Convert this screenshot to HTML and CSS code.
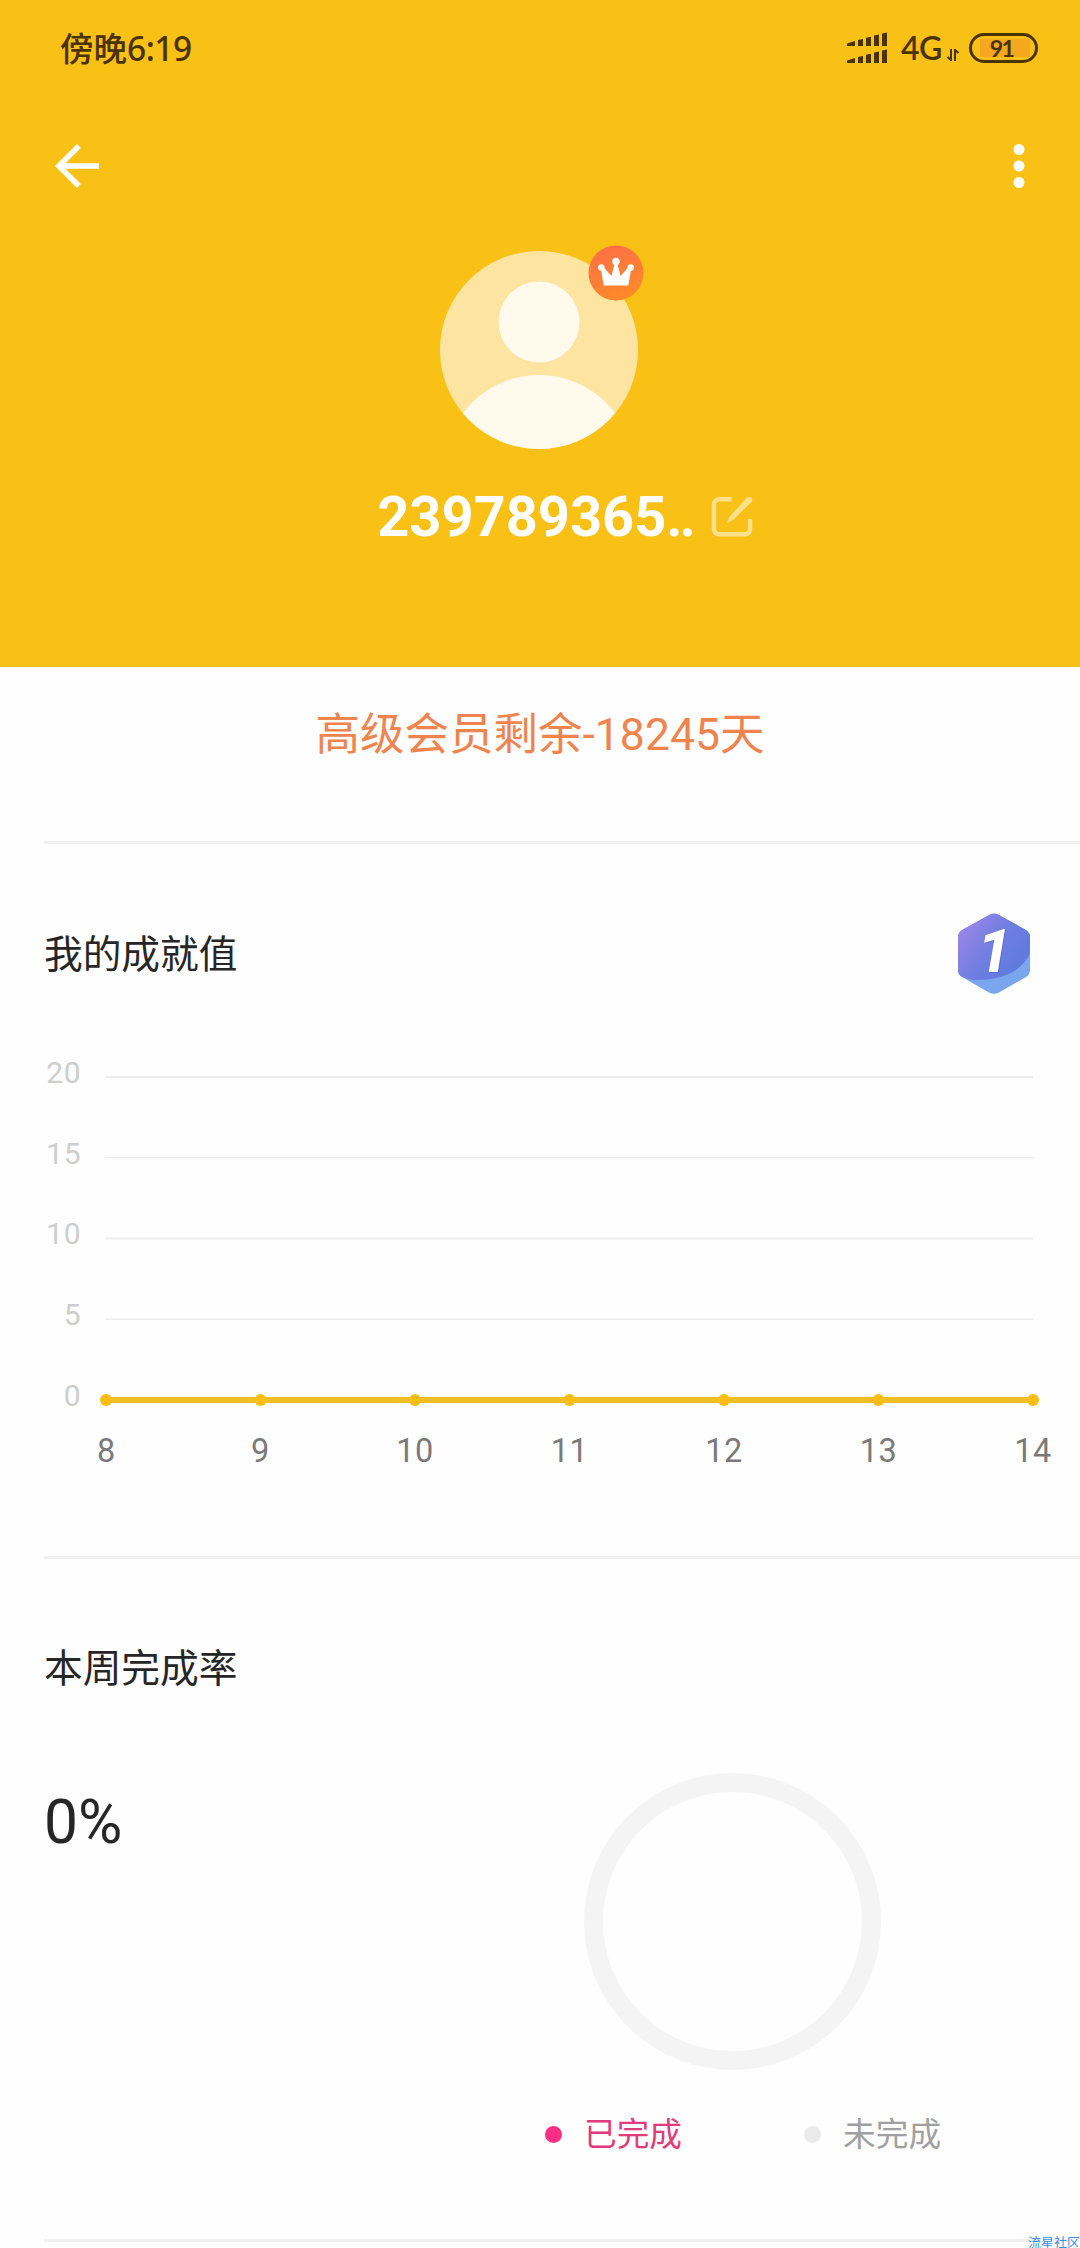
FILE: index.html
```html
<!DOCTYPE html>
<html lang="zh-CN">
<head>
<meta charset="utf-8">
<title>个人资料</title>
<link rel="stylesheet" href="styles.css">
</head>
<body>
<main class="screen">
  <header class="hero">
    <div class="status-bar">
      <div class="clock">傍晚<span class="clock-time">6:19</span></div>
      <div class="status-icons">
        <svg class="signal" width="42" height="32" viewBox="0 0 42 32" fill="#4a3300">
          <path d="M1 11.500l8-2.500v5h-8zM12 8l5-1v7h-5zM20 5.800l5-1v9.200h-5zM28 3.500l5-1v11.500h-5zM36 1.500l5-1v13.500h-5z"/>
          <path d="M1 28.500l8-2.500v5h-8zM12 25l5-1v7h-5zM20 22.800l5-1v9.200h-5zM28 20.500l5-1v11.500h-5zM36 18.500l5-1v13.500h-5z"/>
        </svg>
        <span class="network">4G</span>
        <svg class="transfer" width="12" height="14" viewBox="0 0 12 14" fill="none" stroke="#4a3300" stroke-width="2">
          <path d="M4 1v12M4 12L0.500 9M8 13V1M8 2l3.500 3"/>
        </svg>
        <div class="battery"><span class="battery-level">91</span></div>
      </div>
    </div>
    <nav class="toolbar">
      <svg width="66" height="66" viewBox="0 0 24 24" fill="#fff"><path d="M20 11H7.830l5.590-5.590L12 4l-8 8 8 8 1.410-1.410L7.830 13H20v-2z"/></svg>
      <svg width="66" height="66" viewBox="0 0 24 24" fill="#fff"><circle cx="12" cy="6" r="2"/><circle cx="12" cy="12" r="2"/><circle cx="12" cy="18" r="2"/></svg>
    </nav>
    <div class="avatar">
      <svg width="198" height="198" viewBox="0 0 198 198">
        <defs><clipPath id="face"><circle cx="99" cy="99" r="99"/></clipPath></defs>
        <circle cx="99" cy="99" r="99" fill="#fde4a1"/>
        <g clip-path="url(#face)" fill="#fffaec"><circle cx="99" cy="71" r="40.500"/><circle cx="99" cy="219" r="95"/></g>
      </svg>
      <svg class="crown" width="56" height="56" viewBox="0 0 56 56">
        <defs><linearGradient id="ember" x1="0.300" y1="0" x2="0.700" y2="1"><stop offset="0" stop-color="#ff7047"/><stop offset="1" stop-color="#fe8b27"/></linearGradient></defs>
        <circle cx="28" cy="28" r="27.500" fill="url(#ember)"/>
        <g fill="#fff"><path d="M15.800 40.500L12.500 22.500l2.500-1 8.500 9.500 3.500-14h2l3.500 14 8.500-9.500 2.500 1-3.300 18z"/><circle cx="28" cy="16.500" r="3.700"/><circle cx="13.300" cy="22.500" r="3.200"/><circle cx="42.700" cy="22.500" r="3.200"/></g>
      </svg>
    </div>
    <div class="name-row">
      <h1 class="name">239789365<span class="name-dots">..</span></h1>
      <svg width="42" height="42" viewBox="0 0 42 42" fill="none" stroke="#fde18a" stroke-width="4.500">
        <path d="M20.500 3.300H8a5 5 0 0 0-5 5v25a5 5 0 0 0 5 5h26a5 5 0 0 0 5-5V23"/>
        <path d="M36 1.500a3.200 3.200 0 0 1 4.500 4.500L22.500 23.500l-7 4 3.500-7.500z" fill="#fde18a" stroke="none"/>
      </svg>
    </div>
  </header>

  <section class="membership">高级会员剩余-18245天</section>

  <section class="panel achievement">
    <div class="panel-head">
      <h2 class="panel-title">我的成就值</h2>
      <svg width="72" height="82" viewBox="0 0 72 82">
        <defs>
          <linearGradient id="violet" x1="0" y1="0.200" x2="0.900" y2="0.800"><stop offset="0" stop-color="#9d86e8"/><stop offset="0.550" stop-color="#6e7ee0"/><stop offset="1" stop-color="#5d7bdd"/></linearGradient>
          <clipPath id="hex"><path d="M31 2Q36-1 41 2L68 17Q72 19.500 72 24V57Q72 61.500 68 64L41 79.500Q36 82 31 79.500L4 64Q0 61.500 0 57V24Q0 19.500 4 17Z"/></clipPath>
        </defs>
        <g clip-path="url(#hex)"><path fill="#7ba6ee" d="M0 0h72v82H0z"/><path fill="url(#violet)" d="M0 0H72V41C62 59 44 68 15 67L0 63Z"/></g>
        <text class="rank-shade" x="20.500" y="60">1</text>
        <text class="rank" x="19.500" y="58.500">1</text>
      </svg>
    </div>
    <svg class="chart" width="1080" height="440" viewBox="0 1040 1080 440">
      <g fill="#ededed">
        <rect x="106" y="1076" width="927" height="2"/><rect x="106" y="1157" width="927" height="1.300"/><rect x="106" y="1237.500" width="927" height="2"/><rect x="106" y="1318.500" width="927" height="1.500"/>
      </g>
      <g class="y-labels"><text x="81" y="1083">20</text><text x="81" y="1164">15</text><text x="81" y="1244">10</text><text x="81" y="1325">5</text><text x="81" y="1406">0</text></g>
      <path d="M106 1400H1033" stroke="#efbe25" stroke-width="6"/>
      <g fill="#fbbc14"><circle cx="106" cy="1400" r="6"/><circle cx="260.500" cy="1400" r="6"/><circle cx="415" cy="1400" r="6"/><circle cx="569.500" cy="1400" r="6"/><circle cx="724" cy="1400" r="6"/><circle cx="878.500" cy="1400" r="6"/><circle cx="1033" cy="1400" r="6"/></g>
      <g class="x-labels"><text x="106.500" y="1462">8</text><text x="260.500" y="1462">9</text><text x="415" y="1462">10</text><text x="569.500" y="1462">11</text><text x="724" y="1462">12</text><text x="878.500" y="1462">13</text><text x="1033" y="1462">14</text></g>
    </svg>
  </section>

  <section class="panel completion">
    <h2 class="panel-title">本周完成率</h2>
    <div class="completion-body">
      <div class="percent">0%</div>
      <div class="ring-column">
        <div class="ring"></div>
        <div class="legend">
          <span class="legend-item done"><i class="dot"></i><span class="legend-text">已完成</span></span>
          <span class="legend-item todo"><i class="dot"></i><span class="legend-text">未完成</span></span>
        </div>
      </div>
    </div>
  </section>
  <div class="panel"></div>
  <div class="watermark">流星社区</div>
</main>
</body>
</html>
```

FILE: styles.css
```css
* { box-sizing: border-box; }
body { margin: 0; background: #fefefe; }
svg { display: block; flex: none; }

.screen {
  position: relative;
  width: 1080px;
  height: 2248px;
  overflow: hidden;
  font-family: Roboto, "Noto Sans CJK SC", sans-serif;
  color: #262626;
}

.hero {
  height: 667px;
  background: #f9c015;
  display: flex;
  flex-direction: column;
  align-items: center;
}

.status-bar {
  width: 100%;
  height: 96px;
  padding: 0 42px 0 60px;
  display: flex;
  align-items: center;
  justify-content: space-between;
  color: #4a3300;
}
.clock { font: 500 33.500px/48px "Noto Sans CJK SC", sans-serif; padding-bottom: 2px; white-space: nowrap; }
.clock-time { font-family: "Noto Sans", sans-serif; font-weight: 500; letter-spacing: -0.500px; }
.status-icons { display: flex; align-items: center; }
.network { margin-left: 13px; width: 44px; font: 600 32px/32px Lato, sans-serif; letter-spacing: -0.500px; }
.transfer { margin: 13px 10px 0 2px; }
.battery {
  width: 69px;
  height: 30px;
  border: 3px solid #4a3300;
  border-radius: 15px;
  padding: 3px 5px 3px 8px;
}
.battery-level {
  display: block;
  height: 18px;
  background: #f5a81f;
  font: 700 23px/18px Lato, sans-serif;
  letter-spacing: -1.500px;
  padding-right: 7px;
  text-align: center;
}

.toolbar {
  width: 100%;
  margin-top: 37px;
  padding: 0 28px 0 44px;
  display: flex;
  justify-content: space-between;
}
.avatar { position: relative; margin: 52px 2px 0 0; }
.crown { position: absolute; left: 148px; top: -6px; }

.name-row { display: flex; align-items: center; gap: 18px; margin: 35px 0 0 50px; }
.name { margin: 0; font-size: 56px; line-height: 66px; font-weight: 700; color: #fff; }
.name-dots { letter-spacing: -3px; }

.membership {
  height: 174px;
  padding-top: 35px;
  text-align: center;
  font-size: 44.500px;
  line-height: 66px;
  color: #f0844f;
}

.panel::before { content: ""; display: block; height: 3px; margin-left: 44px; background: #f0f0f0; }
.panel-title { margin: 0; font-size: 38.700px; line-height: 58px; font-weight: 400; }

.achievement { height: 715px; }
.panel-head {
  padding: 69px 50px 0 44px;
  display: flex;
  align-items: center;
  justify-content: space-between;
}
.panel-head .panel-title { padding-top: 2px; }
.rank, .rank-shade { font: italic 800 60px Roboto, sans-serif; fill: #fff; }
.rank-shade { fill: #4a56b8; opacity: 0.350; }
.chart { margin-top: 45px; }
.y-labels { font-size: 30px; fill: #cecece; text-anchor: end; letter-spacing: 0.500px; }
.x-labels { font-size: 32.500px; fill: #7a7a7a; text-anchor: middle; letter-spacing: 0.500px; }

.completion { height: 683px; }
.completion .panel-title { padding: 81px 0 0 44px; }
.completion-body { display: flex; padding: 75px 0 0 44px; }
.percent { width: 501px; padding-top: 14px; font-size: 60.500px; line-height: 72px; }
.ring { width: 297px; height: 297px; margin-left: 39px; border: 19px solid #f4f4f4; border-radius: 50%; }
.legend { display: flex; gap: 122px; margin-top: 38px; }
.legend-item { display: flex; align-items: center; gap: 22px; font-size: 32.700px; line-height: 50px; }
.legend-text { padding-top: 2px; }
.dot { width: 17px; height: 17px; border-radius: 50%; background: currentColor; }
.done { color: #e23a7a; }
.done .dot { background: #ff2d83; }
.todo { color: #a0a0a0; }
.todo .dot { background: #eaeaea; }

.watermark {
  position: absolute;
  left: 1028px;
  top: 2233px;
  font-size: 13px;
  line-height: 20px;
  white-space: nowrap;
  color: #3d8fe0;
}
```
